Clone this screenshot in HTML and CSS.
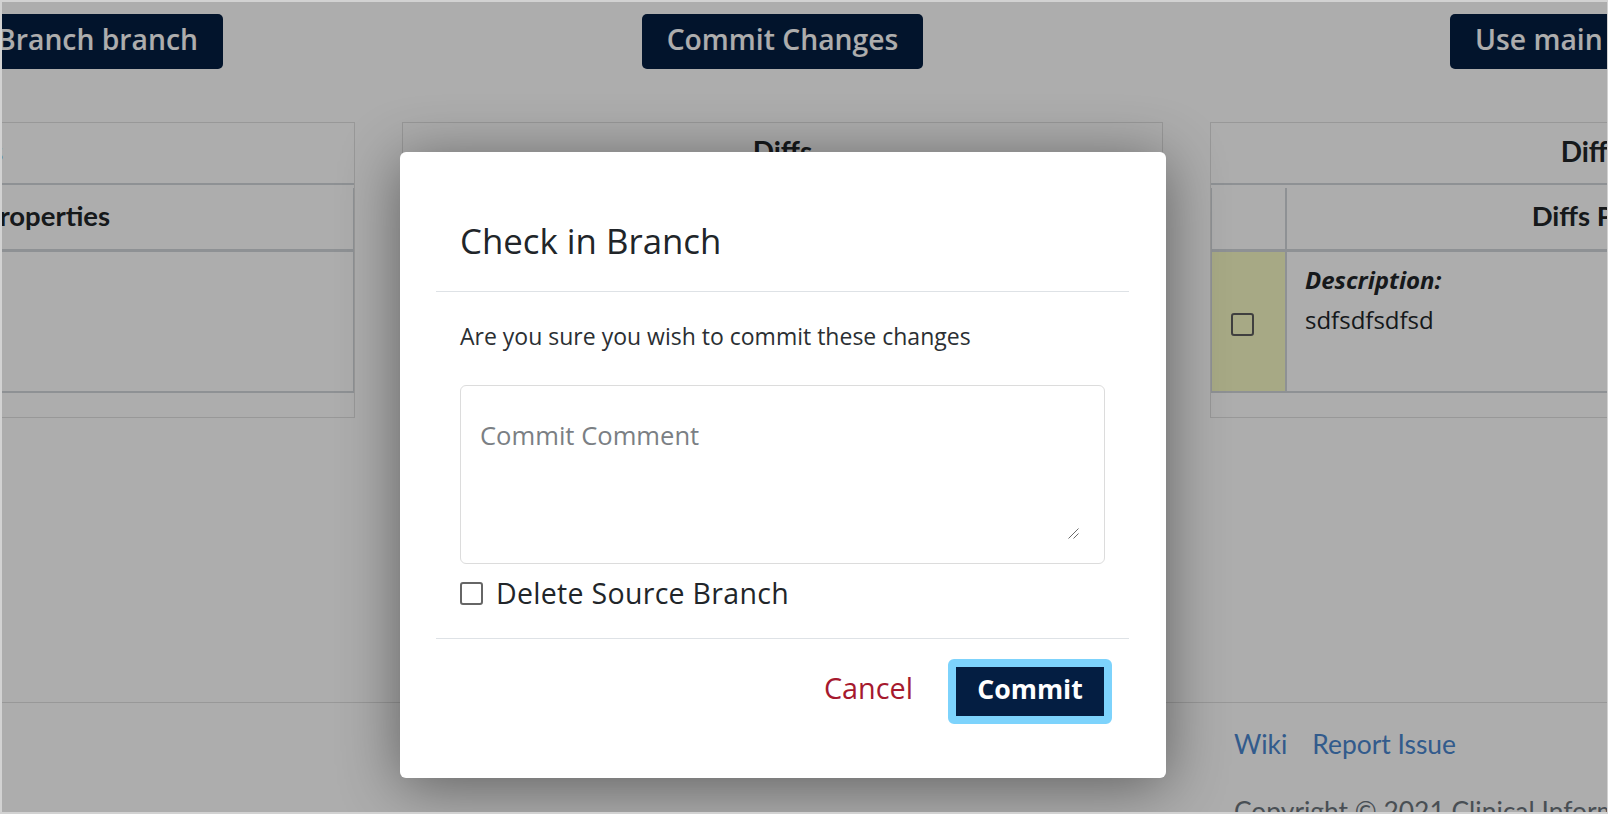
FILE: index.html
```html
<!DOCTYPE html>
<html lang="en">
<head>
<meta charset="utf-8">
<title>Check in Branch</title>
<link rel="stylesheet" href="styles.css">
</head>
<body>
<div class="viewport">
  <div class="page">
    <div class="topbar">
      <button class="nav-btn nav-left">Use Branch branch</button>
      <button class="nav-btn nav-center">Commit Changes</button>
      <button class="nav-btn nav-right">Use main branch</button>
    </div>
    <div class="workspace">
      <section class="card">
        <div class="card-header card-header-link"><a class="card-link" href="#">Items</a></div>
        <div class="card-body">
          <table class="tbl">
            <thead><tr><th class="c1"></th><th>Main Properties</th></tr></thead>
            <tbody><tr><td class="c1"></td><td></td></tr></tbody>
          </table>
        </div>
      </section>
      <section class="card">
        <div class="card-header">Diffs</div>
        <div class="card-body">
          <table class="tbl">
            <thead><tr><th class="c1"></th><th>Diffs Properties</th></tr></thead>
            <tbody><tr><td class="c1"></td><td></td></tr></tbody>
          </table>
        </div>
      </section>
      <section class="card">
        <div class="card-header">Diffs</div>
        <div class="card-body">
          <table class="tbl">
            <thead><tr><th class="c1"></th><th>Diffs Properties</th></tr></thead>
            <tbody>
              <tr>
                <td class="c1 changed"><span class="row-box"></span></td>
                <td class="desc"><div class="desc-label">Description:</div><div class="desc-value">sdfsdfsdfsd</div></td>
              </tr>
            </tbody>
          </table>
        </div>
      </section>
    </div>
    <footer class="footer">
      <div></div>
      <div></div>
      <div class="footer-col">
        <div class="footer-links"><a href="#">Wiki</a><a href="#">Report Issue</a></div>
        <div class="copyright">Copyright © 2021 Clinical Informatics, NHS Digital</div>
      </div>
    </footer>
  </div>

  <div class="backdrop"></div>

  <div class="modal" role="dialog" aria-labelledby="modal-title">
    <div class="modal-header">
      <h2 class="modal-title" id="modal-title">Check in Branch</h2>
    </div>
    <div class="modal-body">
      <p class="prompt">Are you sure you wish to commit these changes</p>
      <div class="field">
        <textarea class="comment" placeholder="Commit Comment"></textarea>
        <svg class="grip" width="11" height="11" viewBox="0 0 11 11" aria-hidden="true">
          <path d="M10.5 0.5 L0.5 10.5 M10.5 5.5 L5.5 10.5" stroke="#6b6b6b" stroke-width="1" fill="none"/>
        </svg>
      </div>
      <label class="check"><input type="checkbox" class="check-input"><span>Delete Source Branch</span></label>
    </div>
    <div class="modal-footer">
      <button class="btn-cancel">Cancel</button>
      <button class="btn-commit">Commit</button>
    </div>
  </div>
</div>
</body>
</html>
```

FILE: styles.css
```css
html {
  background: #d2d2d2;
}
body {
  margin: 0;
  padding: 2px 1px 2px 2px;
  height: 814px;
  box-sizing: border-box;
  overflow: hidden;
  font-family: "Open Sans", "Noto Sans", sans-serif;
  color: #212529;
}
.viewport {
  position: relative;
  height: 810px;
  overflow: hidden;
  background: #ffffff;
}
.page {
  margin-left: -408px;
  width: 2400px;
}

/* top buttons */
.topbar {
  display: grid;
  grid-template-columns: 761px 761px 761px;
  column-gap: 47px;
  padding-top: 12px;
}
.nav-btn {
  height: 55px;
  padding: 0 25px 4px;
  border: none;
  border-radius: 5px;
  background: #041e42;
  color: #ffffff;
  font-family: "Open Sans", sans-serif;
  font-weight: 600;
  font-size: 28.3px;
  line-height: 51px;
  white-space: nowrap;
}
.nav-left { justify-self: end; margin-right: 132px; }
.nav-center { justify-self: center; }
.nav-right { justify-self: start; margin-left: 240px; }

/* cards */
.workspace {
  display: grid;
  grid-template-columns: 761px 761px 761px;
  column-gap: 47px;
  margin-top: 53px;
}
.card {
  border: 1px solid #e0e0e0;
}
.card-header {
  height: 57px;
  padding-bottom: 3px;
  line-height: 57px;
  text-align: center;
  font-family: "Lato", sans-serif;
  font-size: 28px;
  font-weight: 700;
  border-bottom: 2px solid #d2d6da;
}
.card-header-link {
  padding-right: 12px;
}
.card-link {
  color: #3a78c9;
  text-decoration: none;
}
.card-body {
  padding: 3px 0 24px;
}
.tbl {
  width: 100%;
  border-collapse: separate;
  border-spacing: 0;
  border-left: 1px solid #d2d6da;
  border-right: 1px solid #d2d6da;
}
.tbl th {
  height: 56px;
  padding: 0 0 5px;
  line-height: 56px;
  font-family: "Lato", sans-serif;
  font-size: 27.5px;
  font-weight: 700;
  text-align: center;
  border-bottom: 3px solid #d2d6da;
}
.tbl td {
  height: 139px;
  padding: 0;
  vertical-align: top;
  border-bottom: 2px solid #d2d6da;
}
.tbl .c1 {
  width: 73px;
  border-right: 2px solid #d2d6da;
}
.tbl td.changed {
  background: #f7f9c4;
}
.row-box {
  display: block;
  width: 23px;
  height: 23px;
  box-sizing: border-box;
  margin: 61px 0 0 19px;
  border: 2.5px solid #5e5e5e;
  border-radius: 3px;
}
.tbl td.desc {
  padding: 0 18px;
  font-size: 24px;
}
.desc-label {
  margin-top: 10px;
  line-height: 36px;
  font-style: italic;
  font-weight: 700;
}
.desc-value {
  margin-top: 3.5px;
  line-height: 36px;
}

/* footer */
.footer {
  display: grid;
  grid-template-columns: 761px 761px 761px;
  column-gap: 47px;
  margin-top: 284px;
  border-top: 1px solid #e0e0e0;
}
.footer-col {
  padding: 21px 0 0 24px;
  font-family: "Lato", sans-serif;
  font-size: 26.4px;
}
.footer-links {
  display: flex;
  gap: 25px;
  line-height: 40px;
}
.footer-links a {
  color: #4a86cf;
  text-decoration: none;
}
.copyright {
  margin-top: 26.5px;
  line-height: 40px;
  color: #6c757d;
  white-space: nowrap;
}

/* overlay */
.backdrop {
  position: absolute;
  inset: 0;
  background: rgba(0, 0, 0, 0.32);
}
.modal {
  position: absolute;
  left: 398px;
  top: 150px;
  width: 766px;
  box-sizing: border-box;
  padding: 36px 37px 36px 36px;
  background: #ffffff;
  border-radius: 6px;
  box-shadow: 0 8px 60px rgba(0, 0, 0, 0.45);
}
.modal-header {
  padding: 33px 24px 30px;
  border-bottom: 1px solid #dee2e6;
}
.modal-title {
  margin: 0;
  font-family: "Open Sans", sans-serif;
  font-weight: 400;
  font-size: 34.8px;
  line-height: 40px;
  color: #212529;
}
.modal-body {
  padding: 29px 24px 27px;
}
.prompt {
  margin: 0 0 34px;
  font-size: 23px;
  line-height: 30px;
  color: #2b2f33;
}
.field {
  position: relative;
}
.comment {
  display: block;
  width: 100%;
  height: 179px;
  box-sizing: border-box;
  margin: 0;
  padding: 32px 19px 0;
  border: 1px solid #dcdcdc;
  border-radius: 6px;
  resize: none;
  font-family: "Open Sans", sans-serif;
  font-size: 25.6px;
  line-height: 36px;
  color: #212529;
}
.comment::placeholder {
  color: #7b7f84;
}
.grip {
  position: absolute;
  right: 26px;
  bottom: 25px;
}
.check {
  display: flex;
  align-items: center;
  gap: 13px;
  margin-top: 11px;
  font-size: 28.5px;
  letter-spacing: 0.3px;
  line-height: 36px;
  color: #212529;
}
.check-input {
  appearance: none;
  width: 23px;
  height: 23px;
  margin: 0;
  box-sizing: border-box;
  border: 2.5px solid #666666;
  border-radius: 3px;
  background: #ffffff;
}
.modal-footer {
  display: flex;
  justify-content: flex-end;
  align-items: baseline;
  gap: 35px;
  padding: 20px 17px 18px 24px;
  border-top: 1px solid #dee2e6;
}
.btn-cancel {
  padding: 0;
  border: none;
  background: none;
  font-family: "Open Sans", sans-serif;
  font-size: 28.8px;
  line-height: 40px;
  color: #a6192e;
}
.btn-commit {
  width: 164px;
  height: 65px;
  box-sizing: border-box;
  padding: 0 0 6px;
  border: 8px solid #7dd3fc;
  border-radius: 6px;
  background: #041e42;
  color: #ffffff;
  font-family: "Open Sans", sans-serif;
  font-weight: 700;
  font-size: 26.7px;
  line-height: 43px;
}
```
